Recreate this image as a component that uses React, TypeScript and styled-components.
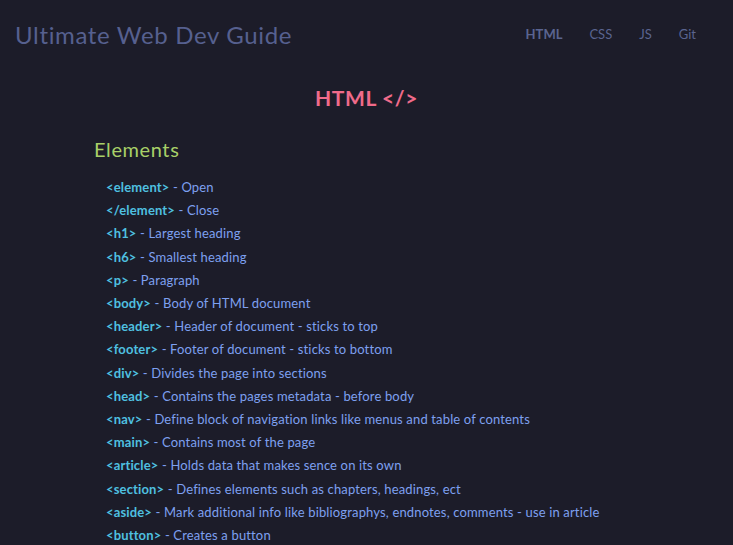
import React from 'react'
import styled, { createGlobalStyle } from 'styled-components'

const GlobalStyle = createGlobalStyle`
  html, body {
    margin: 0;
    padding: 0;
    background: #1c1c29;
  }
  body {
    font-family: Lato, "Noto Sans", sans-serif;
  }
`

const Page = styled.div`
  min-height: 545px;
  background: #1c1c29;
  overflow: hidden;
`

const Header = styled.header`
  display: flex;
  justify-content: space-between;
  align-items: center;
  height: 68px;
  padding: 0 37px 0 15px;
`

const Logo = styled.h1`
  margin: 0;
  font-size: 24px;
  font-weight: 400;
  color: #56608f;
  letter-spacing: 0.65px;
`

const Nav = styled.nav`
  display: flex;
  gap: 27px;
`

const NavLink = styled.a<{ $active?: boolean }>`
  font-size: 13px;
  color: #5a6490;
  font-weight: ${(p) => (p.$active ? 700 : 400)};
  text-decoration: none;
  cursor: pointer;
`

const Main = styled.main`
  padding: 0 0 0 94px;
`

const SectionTitle = styled.h2`
  margin: 17px 0 0 -94px;
  text-align: center;
  font-size: 21px;
  font-weight: 700;
  letter-spacing: 0.6px;
  color: #f06b8a;
`

const Category = styled.h3`
  margin: 27px 0 0;
  font-size: 20px;
  font-weight: 400;
  letter-spacing: 0.6px;
  color: #a8d068;
`

const List = styled.ul`
  list-style: none;
  margin: 15px 0 0;
  padding: 0 0 0 12px;
`

const Item = styled.li`
  font-size: 13px;
  line-height: 23.2px;
  font-weight: 400;
  letter-spacing: 0.15px;
  color: #7ea0f0;
`

const Tag = styled.span`
  color: #4fc0e0;
  font-weight: 700;
`

const elements: [string, string][] = [
  ['<element>', 'Open'],
  ['</element>', 'Close'],
  ['<h1>', 'Largest heading'],
  ['<h6>', 'Smallest heading'],
  ['<p>', 'Paragraph'],
  ['<body>', 'Body of HTML document'],
  ['<header>', 'Header of document - sticks to top'],
  ['<footer>', 'Footer of document - sticks to bottom'],
  ['<div>', 'Divides the page into sections'],
  ['<head>', 'Contains the pages metadata - before body'],
  ['<nav>', 'Define block of navigation links like menus and table of contents'],
  ['<main>', 'Contains most of the page'],
  ['<article>', 'Holds data that makes sence on its own'],
  ['<section>', 'Defines elements such as chapters, headings, ect'],
  ['<aside>', 'Mark additional info like bibliographys, endnotes, comments - use in article'],
  ['<button>', 'Creates a button'],
]

const App = () => {
  return (
    <Page>
      <GlobalStyle />
      <Header>
        <Logo>Ultimate Web Dev Guide</Logo>
        <Nav>
          <NavLink $active>HTML</NavLink>
          <NavLink>CSS</NavLink>
          <NavLink>JS</NavLink>
          <NavLink>Git</NavLink>
        </Nav>
      </Header>
      <Main>
        <SectionTitle>HTML &lt;/&gt;</SectionTitle>
        <Category>Elements</Category>
        <List>
          {elements.map(([tag, desc]) => (
            <Item key={tag}>
              <Tag>{tag}</Tag> - {desc}
            </Item>
          ))}
        </List>
      </Main>
    </Page>
  )
}

export default App
